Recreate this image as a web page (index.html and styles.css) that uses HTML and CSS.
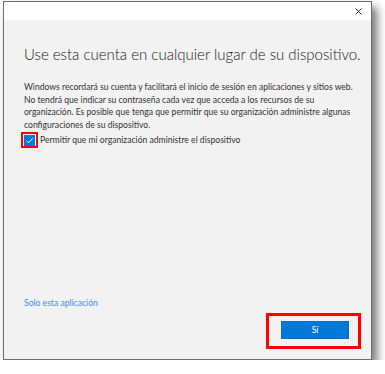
FILE: index.html
```html
<!doctype html>
<html>

<head>
  <meta charset='utf-8'>
  <title>Cuenta</title>
  <link rel="stylesheet" href="styles.css">
</head>

<body>
  <div class='window'>
    <div class='titlebar'>
      <svg class='close' width='7' height='7' viewBox='0 0 7 7'>
        <path d='M0.5 0.5 L6.5 6.5 M6.5 0.5 L0.5 6.5' stroke='#333' stroke-width='1'/>
      </svg>
    </div>
    <div class='content'>
      <h1 class='heading'>Use esta cuenta en cualquier lugar de su dispositivo.</h1>
      <p class='desc'>Windows recordará su cuenta y facilitará el inicio de sesión en aplicaciones y sitios web. No tendrá que indicar su contraseña cada vez que acceda a los recursos de su organización. Es posible que tenga que permitir que su organización administre algunas configuraciones de su dispositivo.</p>
      <div class='checkrow'>
        <div class='mark'>
          <div class='checkbox'>
            <svg width='11' height='11' viewBox='0 0 11 11'>
              <path d='M2.5 5.8 L4.5 7.8 L8.8 3.3' fill='none' stroke='#fff' stroke-width='1'/>
            </svg>
          </div>
        </div>
        <span class='label'>Permitir que mi organización administre el dispositivo</span>
      </div>
      <div class='spacer'></div>
      <a class='link' href='#'>Solo esta aplicación</a>
      <div class='footer'>
        <div class='mark btnmark'>
          <button class='btn'>Sí</button>
        </div>
      </div>
    </div>
  </div>
</body>

</html>
```

FILE: styles.css
```css
* {
  margin: 0;
  padding: 0;
  box-sizing: border-box;
}
body {
  background: #fff;
  font-family: "Lato", "Liberation Sans", sans-serif;
}
.window {
  margin: 1px 0 0 3px;
  width: 369px;
  height: 359px;
  border: 1px solid #6e6e6e;
  background: #f2f2f2;
  display: flex;
  flex-direction: column;
  box-shadow: 5px 6px 9px rgba(0, 0, 0, 0.55);
}
.titlebar {
  height: 18px;
  background: #fff;
  display: flex;
  justify-content: flex-end;
  align-items: center;
  padding-right: 9px;
}
.content {
  flex: 1;
  display: flex;
  flex-direction: column;
  padding: 24px 10px 0 20px;
}
.heading {
  font-size: 15px;
  font-weight: 300;
  color: #222;
  line-height: 20px;
  margin-bottom: 17px;
  white-space: nowrap;
}
.desc {
  font-size: 8.6px;
  line-height: 12.7px;
  color: #333;
}
.checkrow {
  display: flex;
  align-items: center;
  margin-top: 0;
  margin-left: -3px;
}
.mark {
  border: 2px solid #f00;
}
.checkrow .mark {
  padding: 1px 1px 0 1px;
}
.checkbox {
  width: 11px;
  height: 11px;
  background: #0078d7;
  display: flex;
}
.label {
  font-size: 8.6px;
  color: #333;
  margin-left: 2px;
}
.spacer {
  flex: 1;
}
.link {
  font-size: 8.6px;
  color: #3f8fe0;
  text-decoration: none;
  margin-bottom: 5px;
}
.footer {
  display: flex;
  justify-content: flex-end;
  margin-bottom: 10px;
}
.btnmark {
  border-width: 3px;
  padding: 1px 9px 7px 12px;
}
.btn {
  width: 68px;
  height: 18px;
  background: #0078d7;
  border: 1px solid #0a6fc2;
  color: #fff;
  font-family: inherit;
  font-size: 8.6px;
}
```
